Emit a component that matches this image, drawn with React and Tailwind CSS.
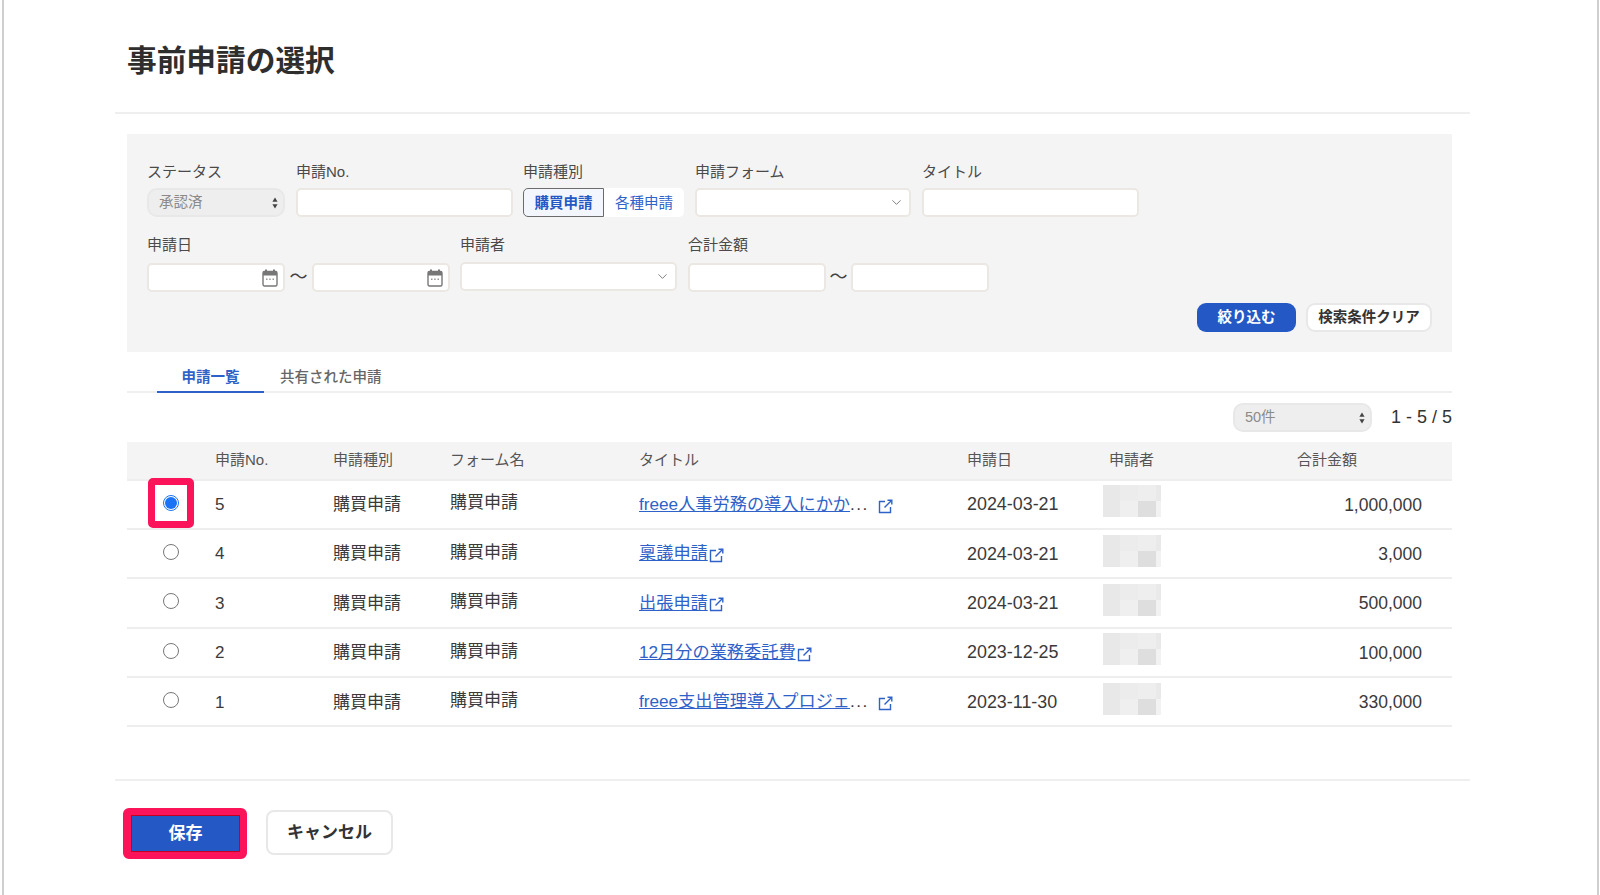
import { ChevronDown } from "lucide-react";

const ROWS = [
  { no: 5, title: "freee人事労務の導入にかか", cut: true, date: "2024-03-21", amount: "1,000,000", selected: true },
  { no: 4, title: "稟議申請", date: "2024-03-21", amount: "3,000" },
  { no: 3, title: "出張申請", date: "2024-03-21", amount: "500,000" },
  { no: 2, title: "12月分の業務委託費", date: "2023-12-25", amount: "100,000" },
  { no: 1, title: "freee支出管理導入プロジェ", cut: true, date: "2023-11-30", amount: "330,000" },
];

const GRID = "grid grid-cols-[88px_118px_117px_189px_328px_142px_188px_155px]";
const FIELD = "h-[29px] bg-white border-2 border-[#ebe8e3] rounded-[5px]";

function Label({ children, className = "mb-[6px]" }) {
  return <div className={`h-5 text-[15px] leading-5 text-[#4a4a4a] whitespace-nowrap ${className}`}>{children}</div>;
}

function UpDown() {
  return (
    <svg width="6" height="12" viewBox="0 0 6 12" className="fill-[#444]">
      <path d="M3 0.5 L5.6 4.8 H0.4 Z" />
      <path d="M3 11.5 L0.4 7.2 H5.6 Z" />
    </svg>
  );
}

function NativeSelect({ value, className }) {
  return (
    <div className={`h-[29px] flex items-center justify-between pl-[10px] pr-[5px] bg-[#efeeee] border-2 border-[#e9e8e8] rounded-[10px] text-[14.5px] text-[#8a8a8a] ${className}`}>
      <span className="pt-px">{value}</span>
      <UpDown />
    </div>
  );
}

function ComboBox({ className }) {
  return (
    <div className={`${FIELD} flex items-center justify-end pr-[5px] ${className}`}>
      <ChevronDown size={15} strokeWidth={1.5} className="text-[#777]" />
    </div>
  );
}

function CalendarIcon() {
  return (
    <svg width="16" height="18" viewBox="0 0 16 18">
      <rect x="3" y="0.5" width="2" height="3" fill="#777" />
      <rect x="11" y="0.5" width="2" height="3" fill="#777" />
      <rect x="1" y="2.5" width="14" height="14.5" rx="1.5" fill="#fff" stroke="#777" strokeWidth="1.4" />
      <rect x="1" y="2.5" width="14" height="4" fill="#777" />
      <rect x="4" y="9.5" width="1.5" height="1.5" fill="#999" />
      <rect x="7.2" y="9.5" width="1.5" height="1.5" fill="#999" />
      <rect x="10.5" y="9.5" width="1.5" height="1.5" fill="#999" />
    </svg>
  );
}

function DateField() {
  return (
    <div className={`${FIELD} w-[138px] flex items-center justify-end pr-[5px]`}>
      <CalendarIcon />
    </div>
  );
}

function Tilde({ className }) {
  return <div className={`text-center text-[18px] leading-[29px] text-[#444] ${className}`}>〜</div>;
}

function LinkOut() {
  return (
    <svg width="15" height="15" viewBox="0 0 15 15" fill="none" className="stroke-[#2f62c9] shrink-0 mt-[3px] ml-px" strokeWidth="1.4">
      <path d="M7 2.5 H1.5 V13.5 H12.5 V8" />
      <path d="M9.5 1.2 H13.8 V5.5" />
      <path d="M13.5 1.5 L6.5 8.5" />
    </svg>
  );
}

function Thumb() {
  return (
    <div className="w-[58px] h-8 -ml-[6px] -mt-[6px] grid grid-cols-[17px_18px_18px_5px] grid-rows-2 bg-[#f0f0f0]">
      <div className="row-span-2 bg-[#e8e8e8]" />
      <div className="bg-[#ececec]" />
      <div className="bg-[#eeeeee]" />
      <div className="bg-[#e9e9e9]" />
      <div className="bg-[#efefef]" />
      <div className="bg-[#dedede]" />
      <div className="bg-[#f2f2f2]" />
    </div>
  );
}

function Radio({ on }) {
  if (on) {
    return (
      <div className="w-4 h-4 -mt-[3px] rounded-full border border-[#1a73f5] flex items-center justify-center bg-white">
        <div className="w-3 h-3 rounded-full bg-[#1a73f5]" />
      </div>
    );
  }
  return <div className="w-4 h-4 -mt-[3px] rounded-full border border-[#777] bg-white" />;
}

function Row({ row }) {
  return (
    <div className={`${GRID} h-[49.4px] items-center border-b-2 border-[#eeeeee] text-[17px] text-[#3a3a3a]`}>
      <div className="relative h-full flex items-center justify-center">
        <Radio on={row.selected} />
        {row.selected && (
          <div className="absolute left-[21px] -top-[3px] w-[46px] h-[50px] border-[7px] border-[#fb1459] rounded-[5px]" />
        )}
      </div>
      <div className="pt-[1px]">{row.no}</div>
      <div className="pt-[1px]">購買申請</div>
      <div className="-mt-[2px]">購買申請</div>
      <div className="flex items-center pt-[1px] whitespace-nowrap text-[17.2px]">
        <span className="underline text-[#2f62c9]">{row.title}</span>
        {row.cut && <span className="mr-2 tracking-[1.5px]">...</span>}
        <LinkOut />
      </div>
      <div className="pt-[1px] text-[17.9px]">{row.date}</div>
      <Thumb />
      <div className="pt-[1px] pr-[30px] text-right text-[17.5px]">{row.amount}</div>
    </div>
  );
}

export default function App() {
  return (
    <div className="w-[1600px] h-[895px] pl-[2px] bg-white font-['Liberation_Sans','Noto_Sans_CJK_JP',sans-serif] text-[#323232] overflow-hidden">
      <div className="h-full w-[1597px] pl-[111px] border-x-2 border-[#cfcfcf]">
        <div className="w-[1355px] h-[114px] pt-[38px] pl-3 border-b-2 border-[#efefef]">
          <h1 className="text-[29.7px] leading-[46px] font-bold text-[#2e2e2e]">事前申請の選択</h1>
        </div>

        <div className="ml-3 w-[1325px]">
          <div className="mt-5 h-[218px] pt-[28px] pl-5 pr-5 bg-[#f5f4f4]">
            <div className="flex gap-[11px]">
              <div>
                <Label>ステータス</Label>
                <NativeSelect value="承認済" className="w-[138px]" />
              </div>
              <div>
                <Label>申請No.</Label>
                <div className={`${FIELD} w-[217px]`} />
              </div>
              <div className="ml-[-1px]">
                <Label>申請種別</Label>
                <div className="flex w-[161px] h-[29px] text-[14.5px] font-bold">
                  <div className="w-[81px] pt-[2px] flex items-center justify-center bg-[#f3f6fc] border border-[#6b6b6b] rounded-l-[5px] text-[#2459c5]">購買申請</div>
                  <div className="w-[80px] pt-[2px] flex items-center justify-center bg-white rounded-r-[5px] font-normal text-[#2f62c9]">各種申請</div>
                </div>
              </div>
              <div>
                <Label>申請フォーム</Label>
                <ComboBox className="w-[216px]" />
              </div>
              <div>
                <Label>タイトル</Label>
                <div className={`${FIELD} w-[217px]`} />
              </div>
            </div>

            <div className="flex mt-[18px]">
              <div>
                <Label className="mb-2">申請日</Label>
                <div className="flex">
                  <DateField />
                  <Tilde className="w-[27px]" />
                  <DateField />
                </div>
              </div>
              <div className="ml-[10px]">
                <Label className="mb-[7px]">申請者</Label>
                <ComboBox className="w-[217px]" />
              </div>
              <div className="ml-[11px]">
                <Label className="mb-2">合計金額</Label>
                <div className="flex">
                  <div className={`${FIELD} w-[138px]`} />
                  <Tilde className="w-[25px]" />
                  <div className={`${FIELD} w-[138px]`} />
                </div>
              </div>
            </div>

            <div className="flex justify-end gap-[10px] mt-[11px]">
              <button className="w-[99px] h-[29px] rounded-[9px] bg-[#2459c5] text-white text-[14.5px] font-bold">絞り込む</button>
              <button className="w-[126px] h-[29px] rounded-[9px] bg-white border-2 border-[#e9e8e8] text-[#333] text-[14.5px] font-bold">検索条件クリア</button>
            </div>
          </div>

          <div className="flex h-[41px] pl-[30px] border-b-2 border-[#efefef] text-[14.5px] font-bold">
            <div className="w-[107px] h-[41px] pt-[15px] text-center leading-5 text-[#2f62c9] border-b-2 border-[#2f62c9]">申請一覧</div>
            <div className="ml-4 pt-[15px] leading-5 font-medium text-[#666]">共有された申請</div>
          </div>

          <div className="flex justify-end items-center gap-[19px] mt-[10px] mb-[10px]">
            <NativeSelect value="50件" className="w-[139px]" />
            <div className="text-[18px] text-[#333] whitespace-pre">1 - 5 / 5</div>
          </div>

          <div className={`${GRID} h-[38.5px] items-center bg-[#f5f4f4] border-b-2 border-[#eeeeee] text-[15px] text-[#555]`}>
            <div />
            <div>申請No.</div>
            <div>申請種別</div>
            <div>フォーム名</div>
            <div>タイトル</div>
            <div>申請日</div>
            <div>申請者</div>
            <div>合計金額</div>
          </div>
          {ROWS.map(row => <Row key={row.no} row={row} />)}
        </div>

        <div className="w-[1355px] mt-[52px] border-t-2 border-[#efefef] pt-[27px] pl-2 flex items-start gap-[19px]">
          <div className="w-[124px] h-[51px] border-[7px] border-l-[8px] border-[#fb1459] rounded-[6px] bg-[#fb1459]">
            <button className="w-full h-full bg-[#2459c5] border border-[#c4001f] text-white text-[17px] font-bold">保存</button>
          </div>
          <button className="w-[127px] h-[45px] mt-[2px] rounded-[8px] bg-white border-2 border-[#e8e8e8] text-[#333] text-[17px] font-bold">キャンセル</button>
        </div>
      </div>
    </div>
  );
}
